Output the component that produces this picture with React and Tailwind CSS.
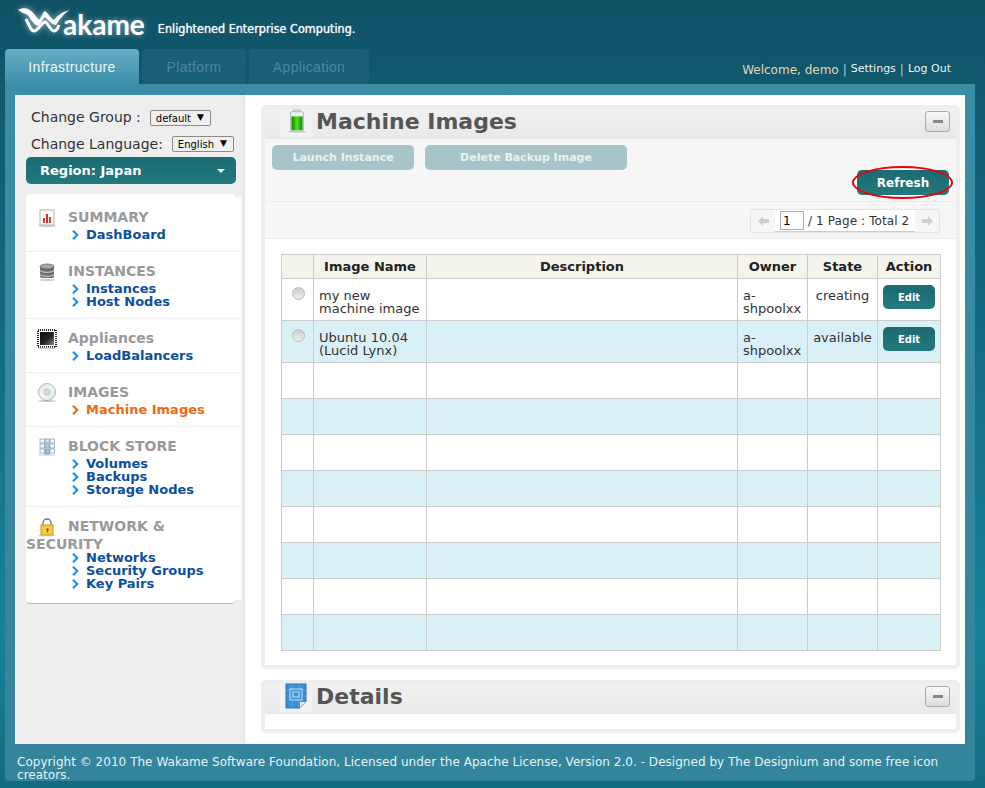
import React from "react";

const nav = [
  { title: "SUMMARY", icon: "chart", links: ["DashBoard"] },
  { title: "INSTANCES", icon: "db", links: ["Instances", "Host Nodes"] },
  { title: "Appliances", icon: "chip", links: ["LoadBalancers"] },
  { title: "IMAGES", icon: "cd", links: ["Machine Images"], active: "Machine Images" },
  { title: "BLOCK STORE", icon: "blocks", links: ["Volumes", "Backups", "Storage Nodes"] },
  { title: "NETWORK & SECURITY", icon: "lock", links: ["Networks", "Security Groups", "Key Pairs"], tight: true },
];

const columns = ["w-[32px]", "w-[113px]", "w-[311px]", "w-[70px]", "w-[70px]", "w-[63px]"];

const rows = [
  { name: "my new machine image", owner: "a-shpoolxx", state: "creating" },
  { name: "Ubuntu 10.04 (Lucid Lynx)", owner: "a-shpoolxx", state: "available" },
];

function NavIcon({ name }) {
  if (name === "chart") {
    return (
      <svg width="20" height="20" viewBox="0 0 20 20">
        <ellipse cx="10" cy="18" rx="9" ry="1" fill="#ccc" />
        <rect x="3" y="2" width="14" height="15" fill="#fafafa" stroke="#b5b5b5" />
        <rect x="6" y="10" width="2" height="5" fill="#d9413f" />
        <rect x="9" y="6" width="2" height="9" fill="#c9302c" />
        <rect x="12" y="9" width="2" height="6" fill="#d9413f" />
      </svg>
    );
  }
  if (name === "db") {
    return (
      <svg width="20" height="20" viewBox="0 0 20 20">
        <ellipse cx="10" cy="18" rx="8" ry="1" fill="#ccc" />
        <rect x="3" y="4" width="14" height="12" rx="2" fill="#707070" />
        <ellipse cx="10" cy="4.5" rx="7" ry="2.5" fill="#a8a8a8" stroke="#555" strokeWidth="0.7" />
        <path d="M3 8.5c2 2.4 12 2.4 14 0M3 12.5c2 2.4 12 2.4 14 0" stroke="#d0d0d0" fill="none" />
      </svg>
    );
  }
  if (name === "chip") {
    return (
      <svg width="20" height="20" viewBox="0 0 20 20">
        <defs>
          <linearGradient id="chipFill" x1="0" y1="0" x2="1" y2="1">
            <stop offset="0" stopColor="#111" />
            <stop offset="0.55" stopColor="#222" />
            <stop offset="1" stopColor="#8a8a8a" />
          </linearGradient>
        </defs>
        <rect x="1" y="1" width="18" height="17" fill="none" stroke="#222" strokeWidth="2" strokeDasharray="1 1" shapeRendering="crispEdges" />
        <rect x="3" y="3" width="14" height="13" fill="url(#chipFill)" />
        <ellipse cx="10" cy="19.2" rx="9" ry="0.8" fill="#ccc" />
      </svg>
    );
  }
  if (name === "cd") {
    return (
      <svg width="20" height="20" viewBox="0 0 20 20">
        <defs>
          <linearGradient id="cdFill" x1="0" y1="0" x2="1" y2="1">
            <stop offset="0" stopColor="#f4d6ee" />
            <stop offset="0.45" stopColor="#f5f5f5" />
            <stop offset="1" stopColor="#cfeaf2" />
          </linearGradient>
        </defs>
        <ellipse cx="10" cy="18" rx="9" ry="1" fill="#ccc" />
        <circle cx="10" cy="9" r="8.5" fill="url(#cdFill)" stroke="#999" strokeWidth="0.7" />
        <circle cx="10" cy="9" r="3" fill="#e8e8e8" stroke="#aaa" strokeWidth="0.7" />
        <circle cx="10" cy="9" r="1.2" fill="#fff" stroke="#999" strokeWidth="0.5" />
      </svg>
    );
  }
  if (name === "blocks") {
    return (
      <svg width="20" height="20" viewBox="0 0 20 20">
        <ellipse cx="10" cy="18" rx="9" ry="1" fill="#ddd" />
        <g stroke="#8a97a3" strokeWidth="0.7">
          <rect x="3" y="2" width="4.5" height="4" fill="#f4f6f8" />
          <rect x="3" y="7" width="4.5" height="4" fill="#f4f6f8" />
          <rect x="3" y="12" width="4.5" height="4" fill="#f4f6f8" />
          <rect x="8" y="2" width="4.5" height="4" fill="#cfe3f3" />
          <rect x="8" y="7" width="4.5" height="4" fill="#a6cfee" />
          <rect x="8" y="12" width="4.5" height="5" fill="#8cc2ea" />
          <rect x="13" y="2" width="4.5" height="4" fill="#f4f6f8" />
          <rect x="13" y="7" width="4.5" height="4" fill="#f4f6f8" />
          <rect x="13" y="12" width="4.5" height="4" fill="#f4f6f8" />
        </g>
      </svg>
    );
  }
  return (
    <svg width="20" height="20" viewBox="0 0 20 20">
      <ellipse cx="10" cy="18.5" rx="9" ry="1" fill="#ddd" />
      <path d="M6 9V6a4 4 0 0 1 8 0v3" fill="none" stroke="#777" strokeWidth="1.4" />
      <rect x="4" y="8" width="12" height="10" fill="#f7c94b" stroke="#d4931c" />
      <circle cx="10.5" cy="12.5" r="1.2" fill="#8a5a10" />
      <rect x="10" y="12.5" width="1" height="3" fill="#8a5a10" />
    </svg>
  );
}

function Chevron({ color }) {
  return (
    <svg width="7" height="10" viewBox="0 0 7 10" className="shrink-0">
      <path d="M1 0.8l4.2 4.2-4.2 4.2" fill="none" stroke={color} strokeWidth="2.2" />
    </svg>
  );
}

function PagerArrow({ flip }) {
  return (
    <svg width="11" height="10" viewBox="0 0 11 10" className={flip ? "rotate-180" : ""}>
      <path d="M0 5l5-5v3h6v4H5v3z" fill="#cfcfcf" />
    </svg>
  );
}

function FakeSelect({ label, className }) {
  return (
    <div className={"flex h-[16px] items-center justify-between rounded-[2px] border border-[#8a8a8a] bg-[#f0f0f0] pl-[5px] pr-[6px] text-[10px] text-black " + className}>
      <span>{label}</span>
      <span className="text-[9px]">▼</span>
    </div>
  );
}

function MinusButton() {
  return (
    <div className="mt-[2px] flex h-[21px] w-[25px] items-center justify-center self-start rounded-[3px] border border-[#aaa] bg-gradient-to-b from-[#fafafa] to-[#dcdcdc]">
      <div className="h-[3px] w-[10px] bg-[#888]" />
    </div>
  );
}

function TealButton({ children, className }) {
  return (
    <button className={"block bg-gradient-to-b from-[#1b6b72] to-[#21797e] font-bold text-white " + className}>
      {children}
    </button>
  );
}

function PanelTitle({ title, icon }) {
  return (
    <div className="flex h-[30px] items-center justify-between bg-gradient-to-b from-[#f1f1f1] to-[#e8e8e8] pr-[6px]">
      <div className="flex items-start self-start">
        <div className="ml-[15px] flex h-[28px] w-[32px] items-start justify-center bg-[#f2f2f2]">{icon}</div>
        <h2 className="ml-[4px] -mt-[2px] text-[22px] font-bold leading-[30px] text-[#555]">{title}</h2>
      </div>
      <MinusButton />
    </div>
  );
}

function BatteryIcon() {
  return (
    <svg width="20" height="24" viewBox="0 0 20 26" className="ml-[2px]">
      <defs>
        <linearGradient id="batteryFill" x1="0" y1="0" x2="1" y2="0">
          <stop offset="0" stopColor="#0d8a00" />
          <stop offset="0.5" stopColor="#4fe01c" />
          <stop offset="1" stopColor="#0d8a00" />
        </linearGradient>
      </defs>
      <ellipse cx="10" cy="24.5" rx="10" ry="1.2" fill="#ccc" />
      <rect x="6" y="1" width="8" height="3" fill="#ddd" stroke="#aaa" strokeWidth="0.6" />
      <rect x="3" y="3" width="14" height="21" rx="1" fill="#eef2ee" stroke="#b5b5b5" />
      <rect x="4" y="8" width="12" height="15" fill="url(#batteryFill)" />
    </svg>
  );
}

function BlueprintIcon() {
  return (
    <svg width="22" height="26" viewBox="0 0 22 26" className="-mt-[1px]">
      <path d="M1 1h20v18l-6 6H1z" fill="#3c8fd6" stroke="#2a70b0" />
      <path d="M1 7h20M1 13h20M7 1v24M14 1v24" stroke="#6fb2e8" strokeWidth="0.5" />
      <rect x="5" y="6" width="12" height="11" fill="none" stroke="#bfe0f7" />
      <rect x="8" y="9" width="6" height="5" fill="none" stroke="#bfe0f7" />
      <path d="M15 25v-6h6z" fill="#dcecf8" />
    </svg>
  );
}

export default function App() {
  return (
    <div className="h-[788px] w-[985px] overflow-hidden bg-gradient-to-b from-[#0f5266] via-[#17829a] via-[80%] to-[#126c80] font-['DejaVu_Sans',sans-serif]">
      {/* header */}
      <header className="flex h-[49px] items-start pl-[18px]">
        <div className="mt-[7px] flex items-start">
          <svg width="54" height="28" viewBox="0 0 54 28" className="drop-shadow-[0_0_3px_rgba(255,255,255,0.6)]">
            <path d="M0 3C5 0 12 1 16 7L21 13C24 9 25 5 27 4C30 6 33 12 36 13C39 10 42 5 52 3C46 6 42 12 38 18C34 18 29 12 27 10C25 12 22 18 20 19C15 18 12 9 8 7C5 6 3 5 0 3Z" fill="#fff" />
            <path d="M8 12C11 18 13 24 16 24C20 24 24 15 27 15C30 15 32 24 36 24C38 24 40 21 41 18" fill="none" stroke="#fff" strokeWidth="3" />
          </svg>
          <span className="ml-[-9px] mt-[2px] font-['Lato',sans-serif] text-[28px] font-bold leading-[30px] text-white [text-shadow:0_0_5px_rgba(255,255,255,0.5)]">akame</span>
        </div>
        <div className="ml-[13px] mt-[20px] font-['DejaVu_Sans_Condensed','DejaVu_Sans',sans-serif] text-[12.5px] leading-[17px] text-[#f2f8fa] [text-shadow:0_0_1px_#fff]">
          Enlightened Enterprise Computing.
        </div>
      </header>

      {/* tabs */}
      <div className="flex h-[35px] pl-[5px] pr-[34px]">
        <div className="flex w-[134px] items-center justify-center rounded-t-[4px] bg-gradient-to-b from-[#65aec4] to-[#3c8ea8] pt-[2px] font-['Liberation_Sans',sans-serif] text-[14px] tracking-[0.35px] text-[#eef6f8]">Infrastructure</div>
        <div className="ml-[3px] flex w-[104px] items-center justify-center rounded-t-[4px] bg-[#195f76] pt-[2px] font-['Liberation_Sans',sans-serif] text-[14px] tracking-[0.35px] text-[#4d8799]">Platform</div>
        <div className="ml-[3px] flex w-[120px] items-center justify-center rounded-t-[4px] bg-[#195f76] pt-[2px] font-['Liberation_Sans',sans-serif] text-[14px] tracking-[0.35px] text-[#4d8799]">Application</div>
        <div className="ml-auto flex h-[35px] items-center pt-[6px] text-[11px] text-[#eef6f8]">
          <span className="text-[12px] text-[#e0d5b8]">Welcome, demo</span>
          <span className="mx-[4px] text-[12px] text-[#b9c9cc]">|</span>
          <span>Settings</span>
          <span className="mx-[4px] text-[12px] text-[#b9c9cc]">|</span>
          <span>Log Out</span>
        </div>
      </div>

      {/* main frame */}
      <div className="ml-[5px] h-[697px] w-[970px] rounded-b-[4px] bg-gradient-to-b from-[#3b8ca6] to-[#34849c] px-[10px] pt-[11px]">
        <div className="flex h-[649px] bg-white">
          {/* sidebar */}
          <aside className="w-[230px] shrink-0 border-r-2 border-[#e6e6e6] bg-[#eeeeee] pl-[11px]">
            <div className="mt-[15px] flex h-[16px] items-center pl-[5px] text-[14px] text-[#333]">
              <span className="-mt-[2px]">Change Group :</span>
              <FakeSelect label="default" className="ml-[9px] w-[61px]" />
            </div>
            <div className="mt-[10px] flex h-[16px] items-center pl-[5px] text-[14px] text-[#333]">
              Change Language:
              <FakeSelect label="English" className="ml-[9px] w-[62px]" />
            </div>
            <div className="mt-[5px] flex h-[27px] w-[210px] items-center justify-between rounded-[5px] bg-gradient-to-b from-[#1b6b72] to-[#21797e] pl-[14px] pr-[11px] text-[13px] font-bold text-white">
              <span>Region: Japan</span>
              <span className="h-0 w-0 border-x-[4px] border-t-[4px] border-x-transparent border-t-white" />
            </div>

            <nav className="mt-[10px]">
              <div className="h-[3px] w-[209px] rounded-t-[4px] bg-white" />
              <div className="w-[215px] bg-white">
                {nav.map((section, i) => (
                  <section
                    key={section.title}
                    className={(i === 0 ? "pt-[11px] " : "pt-[10px] ") + (i < nav.length - 1 ? "border-b border-[#eeeeee] " : "") + "pb-[10px]"}
                  >
                    <h3 className="text-[14px] font-bold leading-[18px] text-[#999]">
                      <span className="float-left h-[18px] w-[42px] pl-[11px]">
                        <NavIcon name={section.icon} />
                      </span>
                      {section.title}
                    </h3>
                    <ul className={section.tight ? "-mt-[2px]" : "mt-[2px]"}>
                      {section.links.map((link) => (
                        <li key={link} className={"flex h-[13px] items-center pl-[46px] text-[13px] font-bold leading-[13px] " + (section.active === link ? "text-[#ec6a10]" : "text-[#0b4f9e]")}>
                          <Chevron color={section.active === link ? "#ec6a10" : "#1a90f0"} />
                          <span className="ml-[7px]">{link}</span>
                        </li>
                      ))}
                    </ul>
                  </section>
                ))}
              </div>
              <div className="h-[4px] w-[209px] rounded-b-[4px] border-b border-[#bbb] bg-white" />
            </nav>
          </aside>

          {/* content */}
          <main className="min-w-0 flex-1 pl-[16px] pr-[5px] pt-[10px]">
            <section className="rounded-[5px] border-4 border-[#eeeeee]">
              <PanelTitle title="Machine Images" icon={<BatteryIcon />} />
              <div className="border-b border-[#ececec] bg-[#f6f6f6] pb-[6px] pl-[7px] pr-[7px] pt-[6px]">
                <div className="flex gap-[11px]">
                  <button className="h-[25px] w-[142px] rounded-[5px] bg-[#a7c5c8] pt-[1px] text-[11px] font-bold text-[#e9f1f2]">Launch Instance</button>
                  <button className="h-[25px] w-[202px] rounded-[5px] bg-[#a7c5c8] pt-[1px] text-[11px] font-bold text-[#e9f1f2]">Delete Backup Image</button>
                </div>
                <div className="flex justify-end">
                  <div className="relative">
                    <TealButton className="h-[25px] w-[92px] rounded-[5px] pt-[1px] text-[12px]">Refresh</TealButton>
                    <div className="absolute -left-[5px] -right-[4px] -top-[4px] -bottom-[4px] rounded-[50%] border-2 border-[#f00000]" />
                  </div>
                </div>
              </div>
              <div className="flex h-[37px] items-center justify-end border-b border-[#ececec] bg-[#f6f6f6] pr-[16px] pt-[2px]">
                <div className="flex h-[24px] w-[190px] items-stretch rounded-[3px] border border-[#e2e2e2] text-[12px] text-[#333]">
                  <div className="flex w-[24px] items-center justify-center">
                    <PagerArrow />
                  </div>
                  <div className="flex flex-1 items-center border-b border-[#ccc] bg-white pl-[5px] tracking-[0.1px]">
                    <div className="mr-[4px] flex h-[19px] w-[24px] items-center border border-[#aaa] pl-[2px] text-black">1</div>
                    / 1 Page : Total 2
                  </div>
                  <div className="flex w-[24px] items-center justify-center">
                    <PagerArrow flip />
                  </div>
                </div>
              </div>
              <div className="bg-white pb-[14px] pl-[16px] pr-[15px] pt-[15px]">
                <table className="w-[659px] table-fixed border-collapse text-[13px] leading-[13px] text-[#333]">
                  <colgroup>
                    {columns.map((c, i) => (
                      <col key={i} className={c} />
                    ))}
                  </colgroup>
                  <thead>
                    <tr className="h-[24px] bg-[#f4f4ec] font-bold text-[#222]">
                      <th className="border border-[#ccc]" />
                      <th className="border border-[#ccc]">Image Name</th>
                      <th className="border border-[#ccc]">Description</th>
                      <th className="border border-[#ccc]">Owner</th>
                      <th className="border border-[#ccc]">State</th>
                      <th className="border border-[#ccc]">Action</th>
                    </tr>
                  </thead>
                  <tbody>
                    {rows.map((row, i) => (
                      <tr key={row.name} className={"h-[42px] " + (i % 2 ? "bg-[#d9f0f6]" : "bg-white")}>
                        <td className="border border-[#ccc] p-0 align-top">
                          <div className="ml-[10px] mt-[8px] h-[13px] w-[13px] rounded-full border border-[#bbb] bg-gradient-to-b from-[#ccc] to-[#eee]" />
                        </td>
                        <td className="border border-[#ccc] px-[5px] pt-[10px] align-top">{row.name}</td>
                        <td className="border border-[#ccc]" />
                        <td className="border border-[#ccc] px-[5px] pt-[10px] align-top">{row.owner}</td>
                        <td className="border border-[#ccc] pt-[10px] text-center align-top">{row.state}</td>
                        <td className="border border-[#ccc] p-0 align-top">
                          <TealButton className="ml-[5px] mt-[6px] h-[24px] w-[52px] rounded-[5px] text-[10px]">Edit</TealButton>
                        </td>
                      </tr>
                    ))}
                    {[0, 1, 2, 3, 4, 5, 6, 7].map((n) => (
                      <tr key={n} className={"h-[36px] " + (n % 2 ? "bg-[#d9f0f6]" : "bg-white")}>
                        <td className="border border-[#ccc]" />
                        <td className="border border-[#ccc]" />
                        <td className="border border-[#ccc]" />
                        <td className="border border-[#ccc]" />
                        <td className="border border-[#ccc]" />
                        <td className="border border-[#ccc]" />
                      </tr>
                    ))}
                  </tbody>
                </table>
              </div>
            </section>

            <section className="mt-[11px] rounded-[5px] border-4 border-[#eeeeee]">
              <PanelTitle title="Details" icon={<BlueprintIcon />} />
              <div className="h-[15px] bg-white" />
            </section>
          </main>
        </div>

        {/* footer */}
        <footer className="ml-[2px] mt-[12px] text-[12px] leading-[13px] tracking-[0.03px] text-[#e4f3f6]">
          Copyright © 2010 The Wakame Software Foundation, Licensed under the Apache License, Version 2.0. - Designed by The Designium and some free icon creators.
        </footer>
      </div>
    </div>
  );
}
